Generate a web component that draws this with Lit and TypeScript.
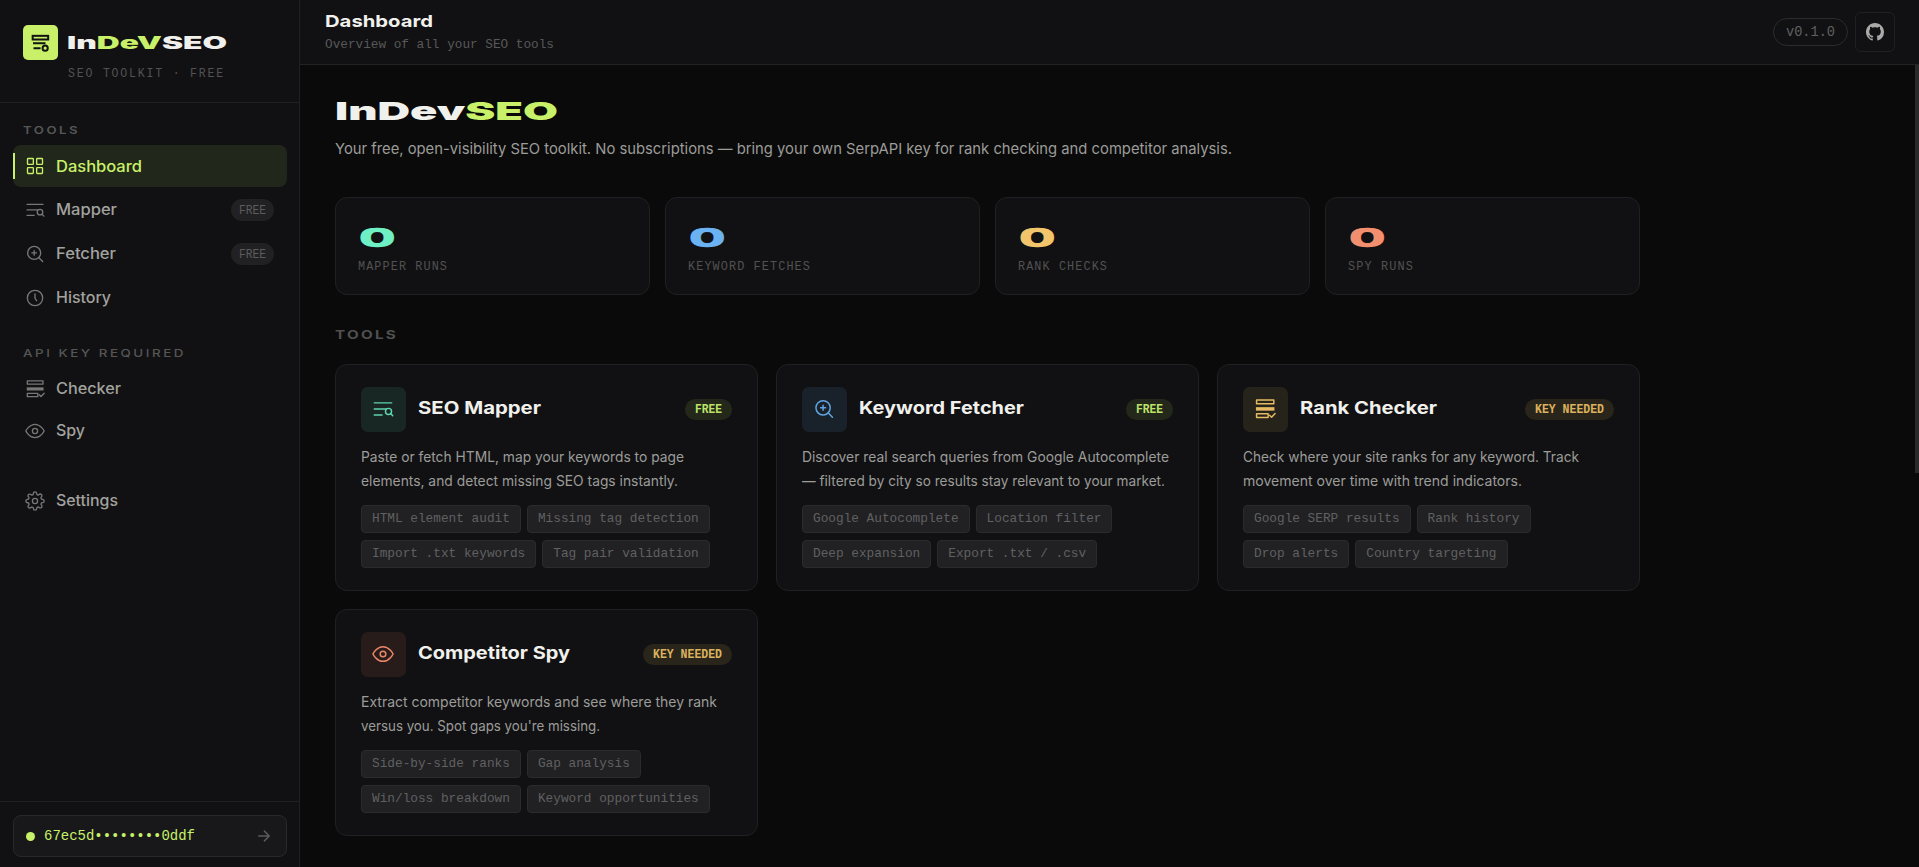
import { LitElement, html, css, svg } from "lit";
import { customElement, property } from "lit/decorators.js";

const icons: Record<string, unknown> = {
  grid: svg`<rect x="3" y="3" width="7" height="7" rx=".8"/><rect x="14" y="3" width="7" height="7" rx=".8"/><rect x="3" y="14" width="7" height="7" rx=".8"/><rect x="14" y="14" width="7" height="7" rx=".8"/>`,
  mapper: svg`<path d="M2.5 5.3H21.5M2.5 11.9H15.5M2.5 18.5H11"/><circle cx="18" cy="14.6" r="3.3"/><path d="M20.4 17L22.6 19.4"/>`,
  fetcher: svg`<circle cx="11" cy="10.7" r="7.8"/><path d="M16.7 16.4L21.2 21M11 8v5.4M8.3 10.7h5.4"/>`,
  clock: svg`<circle cx="12" cy="12" r="9.2"/><path d="M12 7v5.3l2 3"/>`,
  checker: svg`<rect x="2.8" y="2.2" width="18.8" height="4"/><rect x="2.1" y="10" width="20.2" height="3.8" fill="currentColor" stroke="none"/><rect x="2.8" y="17.2" width="12.6" height="4"/><path d="M17 18.8l2.2 2.2 3.8-4"/>`,
  eye: svg`<path d="M1 12s4-8 11-8 11 8 11 8-4 8-11 8-11-8-11-8z"/><circle cx="12" cy="12" r="3.1"/>`,
  gear: svg`<circle cx="12" cy="12" r="3.1"/><path d="M19.4 15a1.65 1.65 0 0 0 .33 1.82l.06.06a2 2 0 0 1 0 2.83 2 2 0 0 1-2.83 0l-.06-.06a1.65 1.65 0 0 0-1.82-.33 1.65 1.65 0 0 0-1 1.51V21a2 2 0 0 1-2 2 2 2 0 0 1-2-2v-.09A1.65 1.65 0 0 0 9 19.4a1.65 1.65 0 0 0-1.82.33l-.06.06a2 2 0 0 1-2.83 0 2 2 0 0 1 0-2.83l.06-.06a1.65 1.65 0 0 0 .33-1.82 1.65 1.65 0 0 0-1.51-1H3a2 2 0 0 1-2-2 2 2 0 0 1 2-2h.09A1.65 1.65 0 0 0 4.6 9a1.65 1.65 0 0 0-.33-1.82l-.06-.06a2 2 0 0 1 0-2.83 2 2 0 0 1 2.83 0l.06.06a1.65 1.65 0 0 0 1.82.33H9a1.65 1.65 0 0 0 1-1.51V3a2 2 0 0 1 2-2 2 2 0 0 1 2 2v.09a1.65 1.65 0 0 0 1 1.51 1.65 1.65 0 0 0 1.82-.33l.06-.06a2 2 0 0 1 2.83 0 2 2 0 0 1 0 2.83l-.06.06a1.65 1.65 0 0 0-.33 1.82V9a1.65 1.65 0 0 0 1.51 1H21a2 2 0 0 1 2 2 2 2 0 0 1-2 2h-.09a1.65 1.65 0 0 0-1.51 1z"/>`,
  arrow: svg`<path d="M5 12h14M12.5 5.5L19 12l-6.5 6.5"/>`,
  logo: svg`<rect x="2" y="3.4" width="18.6" height="4.4"/><path d="M2.4 12.4H17.4M3 18.4H11.5"/><circle cx="17" cy="18.2" r="3.1"/>`,
};

const icon = (name: string) => html`<svg class="icon" viewBox="0 0 24 24">${icons[name]}</svg>`;

/** One line of text set to a given width by widening or narrowing its glyphs. */
@customElement("fit-text")
class FitText extends LitElement {
  @property({ type: Number }) w = 0;
  static styles = css`
    :host { display: block; flex: none; white-space: nowrap; }
    .inner { display: inline-block; vertical-align: top; transform-origin: 0 50%; }
  `;
  updated() {
    const inner = this.renderRoot.querySelector<HTMLElement>(".inner")!;
    inner.style.transform = "none";
    this.style.width = `${this.w}px`;
    const natural = inner.getBoundingClientRect().width;
    if (natural) inner.style.transform = `scaleX(${this.w / natural})`;
  }
  render() {
    return html`<span class="inner"><slot></slot></span>`;
  }
}

interface NavItem { icon: string; label: string; w: number; free?: boolean; active?: boolean }
const tools: NavItem[] = [
  { icon: "grid", label: "Dashboard", w: 86, active: true },
  { icon: "mapper", label: "Mapper", w: 61, free: true },
  { icon: "fetcher", label: "Fetcher", w: 60, free: true },
  { icon: "clock", label: "History", w: 55 },
];
const keyed: NavItem[] = [
  { icon: "checker", label: "Checker", w: 65 },
  { icon: "eye", label: "Spy", w: 29 },
];

const stats = [
  { label: "MAPPER RUNS", w: 90, tone: "mint" },
  { label: "KEYWORD FETCHES", w: 123, tone: "blue" },
  { label: "RANK CHECKS", w: 90, tone: "gold" },
  { label: "SPY RUNS", w: 66, tone: "coral" },
];

interface Tool { icon: string; tone: string; title: string; w: number; free: boolean; lines: [string, number][]; chips: string[][] }
const cards: Tool[] = [
  { icon: "mapper", tone: "mint", title: "SEO Mapper", w: 123, free: true,
    lines: [["Paste or fetch HTML, map your keywords to page", 323], ["elements, and detect missing SEO tags instantly.", 317]],
    chips: [["HTML element audit", "Missing tag detection"], ["Import .txt keywords", "Tag pair validation"]] },
  { icon: "fetcher", tone: "blue", title: "Keyword Fetcher", w: 165, free: true,
    lines: [["Discover real search queries from Google Autocomplete", 367], ["— filtered by city so results stay relevant to your market.", 363]],
    chips: [["Google Autocomplete", "Location filter"], ["Deep expansion", "Export .txt / .csv"]] },
  { icon: "checker", tone: "gold", title: "Rank Checker", w: 137, free: false,
    lines: [["Check where your site ranks for any keyword. Track", 336], ["movement over time with trend indicators.", 279]],
    chips: [["Google SERP results", "Rank history"], ["Drop alerts", "Country targeting"]] },
  { icon: "eye", tone: "coral", title: "Competitor Spy", w: 152, free: false,
    lines: [["Extract competitor keywords and see where they rank", 356], ["versus you. Spot gaps you're missing.", 239]],
    chips: [["Side-by-side ranks", "Gap analysis"], ["Win/loss breakdown", "Keyword opportunities"]] },
];

@customElement("app-root")
class AppRoot extends LitElement {
  static styles = css`
    * { box-sizing: border-box; }
    :host {
      display: flex; height: 100vh; overflow: hidden; background: #0a0a0a; color: #f0f0ec;
      font-family: Inter, "Noto Sans", sans-serif;
      --lime: #c8f169; --line: #202022; --panel: #111113; --mid: #9c9c99;
    }
    .mono { font-family: "Liberation Mono", monospace; }
    .icon { width: 20px; height: 20px; flex: none; fill: none; stroke: currentColor; stroke-width: 1.6; stroke-linecap: round; stroke-linejoin: round; overflow: visible; }
    .lime { color: var(--lime); }

    .sidebar { width: 300px; flex: none; display: flex; flex-direction: column; background: var(--panel); border-right: 1px solid var(--line); }
    .brand { height: 103px; padding: 25px 23px 0; border-bottom: 1px solid var(--line); flex: none; }
    .brand-row { display: flex; align-items: center; gap: 9px; }
    .logo { width: 35px; height: 35px; border-radius: 5px; background: var(--lime); color: #121410; display: grid; place-items: center; }
    .logo .icon { width: 20px; height: 20px; stroke-width: 2.4; stroke-linecap: butt; stroke-linejoin: miter; }
    .name { font-size: 17px; font-weight: 900; line-height: 24px; }
    .tagline { margin: 6px 0 0 45px; font-size: 13px; line-height: 16px; letter-spacing: 2px; color: #525252; }

    .nav { flex: 1; padding: 0 12px 0 13px; display: flex; flex-direction: column; gap: 2px; }
    .group { margin-left: 9.5px; font-size: 10.5px; font-weight: 600; line-height: 15px; letter-spacing: 2px; color: #565656; }
    .g1 { margin-top: 20px; margin-bottom: 5px; }
    .g2 { margin-top: 25px; margin-bottom: 6px; font-weight: 500; }
    .item { height: 42px; display: flex; align-items: center; padding: 0 13px 0 12px; gap: 11px; border-radius: 8px; color: #777775; flex: none; }
    .item .label { font-size: 15.4px; font-weight: 450; line-height: 22px; color: #a2a29f; }
    .item.active { background: #22271b; color: var(--lime); position: relative; }
    .item.active .label { color: var(--lime); font-weight: 500; padding-top: 1px; }
    .item.active::before { content: ""; position: absolute; left: 0; top: 8px; width: 2px; height: 26px; background: var(--lime); }
    .item.short { height: 40px; }
    .item.settings { margin-top: 27px; }
    .free { margin-left: auto; height: 22px; padding: 0 8px; border-radius: 11px; background: #212124; font-size: 12.8px; line-height: 23px; color: #5c5c5c; }
    .foot { border-top: 1px solid var(--line); height: 66px; padding: 13px 12px 0 13px; flex: none; }
    .key { height: 42px; border: 1px solid #29292b; border-radius: 8px; background: #18181a; display: flex; align-items: center; padding: 0 14px 0 12px; color: #5a5a5a; }
    .dot { width: 9px; height: 9px; border-radius: 50%; background: var(--lime); margin-right: 9px; }
    .hash { font-size: 14.5px; line-height: 20px; color: var(--lime); }
    .key .icon { width: 18px; height: 18px; margin-left: auto; margin-right: -1px; stroke-width: 2; }

    .main { flex: 1; min-width: 0; display: flex; flex-direction: column; position: relative; }
    .top { height: 65px; flex: none; background: var(--panel); border-bottom: 1px solid #232325; display: flex; align-items: center; padding: 0 24px 0 25px; gap: 7px; }
    .heads { margin-right: auto; padding-bottom: 1px; }
    .page { font-size: 16.5px; font-weight: 700; line-height: 22px; }
    .sub { font-size: 13.6px; line-height: 18px; padding-top: 4px; color: #585858; }
    .ver { height: 28px; border: 1px solid #2b2b2e; border-radius: 14px; padding: 0 12px; font-size: 14.2px; line-height: 26px; color: #606060; }
    .gh { width: 40px; height: 40px; border: 1px solid #202022; border-radius: 6px; display: grid; place-items: center; }
    .gh svg { width: 18px; height: 18px; fill: #aaaaa8; }
    .thumb { position: absolute; right: 0; top: 65px; width: 4px; height: 408px; background: #2a2a2b; }

    .content { width: 1305px; margin-left: 35px; padding-top: 31px; }
    .hero { font-size: 25px; font-weight: 900; line-height: 30px; }
    .lead { margin-top: 11px; font-size: 15px; line-height: 24px; color: var(--mid); }
    .stats { margin-top: 36px; display: grid; grid-template-columns: repeat(4, 1fr); gap: 15px; }
    .stat { height: 98px; border: 1px solid var(--line); border-radius: 12px; background: var(--panel); padding: 24px 22px 0; }
    .num { font-size: 22.8px; font-weight: 400; line-height: 31px; margin-left: 1.5px; -webkit-text-stroke: 2.3px currentColor; }
    .cap { margin-top: 6px; font-size: 12.8px; line-height: 16px; letter-spacing: 1.2px; color: #525252; }
    .section { margin-top: 30px; font-size: 12px; font-weight: 700; line-height: 20px; letter-spacing: 1.8px; color: #505050; }
    .tools { margin-top: 19px; display: grid; grid-template-columns: repeat(3, 1fr); gap: 18px; }
    .card { height: 227px; border: 1px solid var(--line); border-radius: 12px; background: var(--panel); padding: 22px 25px; }
    .head { display: flex; align-items: center; gap: 12px; }
    .tile { width: 45px; height: 45px; border-radius: 7px; display: grid; place-items: center; }
    .tile .icon { width: 22px; height: 22px; margin: 0 1px 1px 0; }
    .title { font-size: 17.5px; font-weight: 700; line-height: 24px; margin: -3px 0 0 -.5px; }
    .badge { margin-left: auto; height: 21px; border-radius: 11px; padding: 0 10px; font-size: 12.8px; font-weight: 700; line-height: 21px; }
    .badge.open { background: #23281b; color: #bfe368; }
    .badge.need { background: #29251b; color: #dcb25e; }
    .desc { margin-top: 13px; font-size: 14.2px; line-height: 24px; color: var(--mid); }
    .chips { margin-top: 12px; display: flex; flex-direction: column; gap: 7px; }
    .chip-row { display: flex; gap: 6px; }
    .chip { height: 28px; border: 1px solid #2b2b2e; border-radius: 4px; background: #212124; padding: 0 10px; font-size: 12.77px; line-height: 26px; color: #606060; white-space: nowrap; }
    .mint { color: #6ff0c4; } .blue { color: #6bb2f2; } .gold { color: #f2c46c; } .coral { color: #f28f6f; }
    .tile.mint { background: #192724; color: #5fd4ad; } .tile.blue { background: #19222b; color: #62a5e2; }
    .tile.gold { background: #26241a; color: #e6b964; } .tile.coral { background: #281c1b; color: #ea8768; }
  `;

  item(n: NavItem, extra = "") {
    return html`<div class="item ${n.active ? "active" : ""} ${extra}">
      ${icon(n.icon)}<fit-text class="label" .w=${n.w}>${n.label}</fit-text>
      ${n.free ? html`<div class="free mono"><fit-text .w=${27}>FREE</fit-text></div>` : ""}
    </div>`;
  }

  card(c: Tool) {
    return html`<article class="card">
      <div class="head">
        <div class="tile ${c.tone}">${icon(c.icon)}</div>
        <fit-text class="title" .w=${c.w}>${c.title}</fit-text>
        <div class="badge mono ${c.free ? "open" : "need"}"><fit-text .w=${c.free ? 27 : 69}>${c.free ? "FREE" : "KEY NEEDED"}</fit-text></div>
      </div>
      <div class="desc">${c.lines.map(([text, w]) => html`<fit-text .w=${w}>${text}</fit-text>`)}</div>
      <div class="chips">${c.chips.map((row) => html`<div class="chip-row">${row.map((s) => html`<span class="chip mono">${s}</span>`)}</div>`)}</div>
    </article>`;
  }

  render() {
    return html`
      <aside class="sidebar">
        <div class="brand">
          <div class="brand-row">
            <div class="logo">${icon("logo")}</div>
            <fit-text class="name" .w=${160}>In<span class="lime">DeV</span>SEO</fit-text>
          </div>
          <fit-text class="tagline mono" .w=${157}>SEO TOOLKIT · FREE</fit-text>
        </div>
        <nav class="nav">
          <fit-text class="group g1" .w=${57}>TOOLS</fit-text>
          ${tools.map((n) => this.item(n))}
          <fit-text class="group g2" .w=${163}>API KEY REQUIRED</fit-text>
          ${keyed.map((n) => this.item(n, "short"))}
          ${this.item({ icon: "gear", label: "Settings", w: 62 }, "settings")}
        </nav>
        <div class="foot">
          <div class="key"><span class="dot"></span><fit-text class="hash mono" .w=${151}>67ec5d••••••••0ddf</fit-text>${icon("arrow")}</div>
        </div>
      </aside>
      <main class="main">
        <header class="top">
          <div class="heads">
            <fit-text class="page" .w=${108}>Dashboard</fit-text>
            <fit-text class="sub mono" .w=${229}>Overview of all your SEO tools</fit-text>
          </div>
          <div class="ver mono"><fit-text .w=${49}>v0.1.0</fit-text></div>
          <div class="gh"><svg viewBox="0 0 16 16"><path d="M8 0C3.58 0 0 3.58 0 8c0 3.54 2.29 6.53 5.47 7.59.4.07.55-.17.55-.38 0-.19-.01-.82-.01-1.49-2.01.37-2.53-.49-2.69-.94-.09-.23-.48-.94-.82-1.13-.28-.15-.68-.52-.01-.53.63-.01 1.08.58 1.23.82.72 1.21 1.87.87 2.33.66.07-.52.28-.87.51-1.07-1.78-.2-3.64-.89-3.64-3.95 0-.87.31-1.59.82-2.15-.08-.2-.36-1.02.08-2.12 0 0 .67-.21 2.2.82.64-.18 1.32-.27 2-.27s1.36.09 2 .27c1.53-1.04 2.2-.82 2.2-.82.44 1.1.16 1.92.08 2.12.51.56.82 1.27.82 2.15 0 3.07-1.87 3.75-3.65 3.95.29.25.54.73.54 1.48 0 1.07-.01 1.93-.01 2.2 0 .21.15.46.55.38A8.01 8.01 0 0 0 16 8c0-4.42-3.58-8-8-8z"/></svg></div>
        </header>
        <div class="content">
          <fit-text class="hero" .w=${223}>InDev<span class="lime">SEO</span></fit-text>
          <fit-text class="lead" .w=${897}>Your free, open-visibility SEO toolkit. No subscriptions — bring your own SerpAPI key for rank checking and competitor analysis.</fit-text>
          <section class="stats">
            ${stats.map((s) => html`<div class="stat"><fit-text class="num ${s.tone}" .w=${34.5}>0</fit-text><fit-text class="cap mono" .w=${s.w}>${s.label}</fit-text></div>`)}
          </section>
          <fit-text class="section" .w=${63}>TOOLS</fit-text>
          <section class="tools">${cards.map((c) => this.card(c))}</section>
        </div>
        <div class="thumb"></div>
      </main>`;
  }
}
